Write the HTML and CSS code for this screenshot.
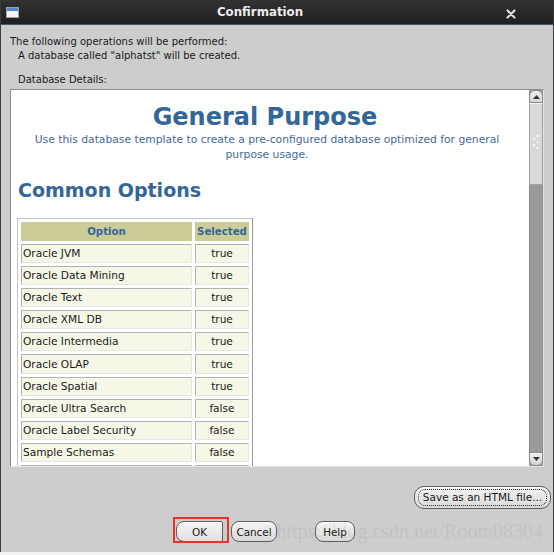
FILE: index.html
```html
<!DOCTYPE html>
<html>
<head>
<meta charset="utf-8">
<link rel="stylesheet" href="styles.css">
</head>
<body>
<div class="window">
  <div class="titlebar">
    <div class="tb-left">
      <svg class="app-icon" width="13" height="11" viewBox="0 0 13 11">
        <rect x="0.5" y="0.5" width="12" height="10" fill="#f4f4f4" stroke="#9aa3ad"/>
        <rect x="1" y="1" width="11" height="3" fill="#5d86c4"/>
      </svg>
    </div>
    <div class="tb-title">Confirmation</div>
    <div class="tb-right">
      <svg width="10" height="10" viewBox="0 0 10 10">
        <path d="M1.5 1.5 L8.5 8.5 M8.5 1.5 L1.5 8.5" stroke="#dcdcdc" stroke-width="2.2" stroke-linecap="round"/>
      </svg>
    </div>
  </div>
  <div class="body">
    <p class="intro">The following operations will be performed:</p>
    <p class="intro indent">A database called "alphatst" will be created.</p>
    <p class="label">Database Details:</p>
    <div class="panel">
      <div class="viewport">
        <h1 class="page-title">General Purpose</h1>
        <p class="desc">Use this database template to create a pre-configured database optimized for general<br>purpose usage.</p>
        <h2 class="section">Common Options</h2>
        <table class="options">
          <tr><th class="c-opt">Option</th><th class="c-sel">Selected</th></tr>
          <tr><td>Oracle JVM</td><td class="val">true</td></tr>
          <tr><td>Oracle Data Mining</td><td class="val">true</td></tr>
          <tr><td>Oracle Text</td><td class="val">true</td></tr>
          <tr><td>Oracle XML DB</td><td class="val">true</td></tr>
          <tr><td>Oracle Intermedia</td><td class="val">true</td></tr>
          <tr><td>Oracle OLAP</td><td class="val">true</td></tr>
          <tr><td>Oracle Spatial</td><td class="val">true</td></tr>
          <tr><td>Oracle Ultra Search</td><td class="val">false</td></tr>
          <tr><td>Oracle Label Security</td><td class="val">false</td></tr>
          <tr><td>Sample Schemas</td><td class="val">false</td></tr>
          <tr><td>&nbsp;</td><td class="val">&nbsp;</td></tr>
        </table>
      </div>
      <div class="scrollbar">
        <div class="sb-btn sb-up">
          <svg width="7" height="4" viewBox="0 0 7 4"><path d="M0 4 L3.5 0 L7 4 Z" fill="#333"/></svg>
        </div>
        <div class="sb-thumb">
          <svg width="8" height="18" viewBox="0 0 8 18">
            <circle cx="5.5" cy="2" r="1" fill="#fff"/>
            <circle cx="2" cy="5" r="1" fill="#fff"/>
            <circle cx="5.5" cy="8" r="1" fill="#fff"/>
            <circle cx="2" cy="11" r="1" fill="#fff"/>
            <circle cx="5.5" cy="14" r="1" fill="#fff"/>
          </svg>
        </div>
        <div class="sb-track"></div>
        <div class="sb-btn sb-down">
          <svg width="7" height="4" viewBox="0 0 7 4"><path d="M0 0 L3.5 4 L7 0 Z" fill="#333"/></svg>
        </div>
      </div>
    </div>
    <div class="save-row">
      <button class="btn save"><span class="focus">Save as an HTML file...</span></button>
    </div>
    <div class="actions">
      <button class="btn ok">OK</button>
      <button class="btn cancel">Cancel</button>
      <button class="btn help">Help</button>
    </div>
    <div class="highlight"></div>
    <div class="watermark">https://blog.csdn.net/Room08304</div>
  </div>
</div>
</body>
</html>
```

FILE: styles.css
```css
html, body {
  margin: 0;
  padding: 0;
  background: #f2f2f2;
}

.window {
  width: 552px;
  height: 552px;
  border-left: 1px solid #3c3c3c;
  border-right: 1px solid #3c3c3c;
  background: #cdcdcd;
  display: flex;
  flex-direction: column;
  font-family: "DejaVu Sans", sans-serif;
  color: #1a1a1a;
  position: relative;
}

.titlebar {
  height: 24px;
  border-bottom: 1px solid #46566a;
  background: linear-gradient(#323232, #1f1f1f);
  display: flex;
  align-items: center;
}

.tb-left {
  width: 28px;
  display: flex;
  align-items: center;
  padding-left: 5px;
  box-sizing: border-box;
}

.app-icon {
  display: block;
  margin-top: 1px;
}

.tb-title {
  flex: 1;
  text-align: center;
  color: #ececec;
  font-weight: bold;
  font-size: 11.8px;
  line-height: 25px;
}

.tb-right {
  width: 62px;
  display: flex;
  align-items: center;
  padding-left: 15px;
  box-sizing: border-box;
  padding-top: 3px;
}

.tb-right svg {
  display: block;
}

.body {
  flex: 1;
  display: flex;
  flex-direction: column;
  position: relative;
}

.intro {
  margin: 10px 0 0 9px;
  font-size: 10px;
  line-height: 14px;
}

.intro.indent {
  margin: 0 0 0 17px;
  line-height: 13px;
}

.label {
  margin: 11px 0 3px 17px;
  font-size: 10px;
  line-height: 13px;
}

.panel {
  margin-left: 9px;
  width: 534px;
  height: 378px;
  box-sizing: border-box;
  border: 1px solid;
  border-color: #8e8e8e #e2e2e2 #e2e2e2 #8e8e8e;
  display: flex;
  background: #ffffff;
}

.viewport {
  flex: 1;
  overflow: hidden;
  padding: 13px 17px 0 7px;
  background: #ffffff;
}

.page-title {
  margin: 0;
  text-align: center;
  font-size: 24px;
  line-height: 28px;
  font-weight: bold;
  color: #336699;
}

.desc {
  margin: 1px 0 0 0;
  padding-left: 4px;
  text-align: center;
  font-size: 10.75px;
  line-height: 15px;
  color: #3f6b9a;
}

.section {
  margin: 17px 0 0 0;
  font-size: 19px;
  line-height: 22px;
  font-weight: bold;
  color: #336699;
}

.options {
  margin: 17px 0 0 -1px;
  width: 236px;
  table-layout: fixed;
  border-collapse: separate;
  border-spacing: 3px;
  border: 1px solid;
  border-color: #c2c2c2 #9a9a9a #9a9a9a #c2c2c2;
  font-size: 10.6px;
}

.options th {
  box-sizing: border-box;
  height: 19px;
  padding: 0;
  background: #cccc99;
  color: #336699;
  font-weight: bold;
  font-size: 10.2px;
  line-height: 19px;
  text-align: center;
  white-space: nowrap;
  overflow: hidden;
}

.options th.c-opt {
  width: 171px;
}

.options th.c-sel {
  width: 54px;
}

.options td {
  box-sizing: border-box;
  height: 19.1px;
  padding: 0 1px;
  border: 1px solid;
  border-color: #b2b2b2 #e6e6e6 #e6e6e6 #b2b2b2;
  background: #f7f7e7;
  color: #1a1a1a;
  line-height: 17px;
  white-space: nowrap;
  overflow: hidden;
}

.options td.val {
  text-align: center;
}

.scrollbar {
  width: 14px;
  display: flex;
  flex-direction: column;
  background: #9c9c9c;
}

.sb-btn {
  height: 13px;
  box-sizing: border-box;
  border: 1px solid #8a8a8a;
  background: linear-gradient(#f0f0f0, #d6d6d6);
  display: flex;
  align-items: center;
  justify-content: center;
}

.sb-btn svg {
  display: block;
}

.sb-up {
  border-radius: 6px 6px 0 0;
}

.sb-down {
  height: 14px;
  border-radius: 0 0 6px 6px;
}

.sb-thumb {
  height: 82px;
  box-sizing: border-box;
  border: 1px solid #a2a2a2;
  border-top-color: #f4f4f4;
  background: #d9d9d9;
  display: flex;
  align-items: flex-start;
  justify-content: center;
  padding-top: 30px;
}

.sb-thumb svg {
  display: block;
}

.sb-track {
  flex: 1;
  background: #9a9a9a;
  border-left: 1px solid #8c8c8c;
  border-right: 1px solid #8c8c8c;
}

.save-row {
  margin-top: 19px;
  display: flex;
  justify-content: flex-end;
  padding-right: 2px;
}

.btn {
  font-family: "DejaVu Sans", sans-serif;
  font-size: 10.4px;
  color: #1a1a1a;
  border: 1px solid #5e5e5e;
  border-radius: 8px;
  background: linear-gradient(#f4f4f4, #d9d9d9);
  box-shadow: inset 0 1px 0 #ffffff;
  padding: 0;
  margin: 0;
  box-sizing: border-box;
  display: flex;
  align-items: center;
  justify-content: center;
}

.save {
  width: 137px;
  height: 23px;
  font-size: 10.5px;
  border-radius: 10px;
}

.save .focus {
  display: block;
  width: 129px;
  height: 17px;
  line-height: 15px;
  box-sizing: border-box;
  border: 1px dotted #2a2a2a;
  border-radius: 7px;
  text-align: center;
}

.actions {
  margin-top: 12px;
  height: 21px;
  display: flex;
  padding-left: 175px;
}

.actions .btn {
  height: 21px;
}

.ok {
  width: 47px;
  border-radius: 8px 2px 2px 8px;
  background: linear-gradient(#f6f6f6, #e0e0e0);
}

.cancel {
  width: 46px;
  margin-left: 8px;
}

.help {
  width: 40px;
  margin-left: 38px;
}

.highlight {
  position: absolute;
  left: 172px;
  top: 492px;
  width: 56px;
  height: 26px;
  box-sizing: border-box;
  border: 2px solid #e8342f;
}

.watermark {
  position: absolute;
  right: 10px;
  top: 496px;
  font-family: "Liberation Serif", serif;
  font-size: 20px;
  line-height: 20px;
  color: rgba(140, 140, 140, 0.16);
  white-space: nowrap;
  pointer-events: none;
}
```
